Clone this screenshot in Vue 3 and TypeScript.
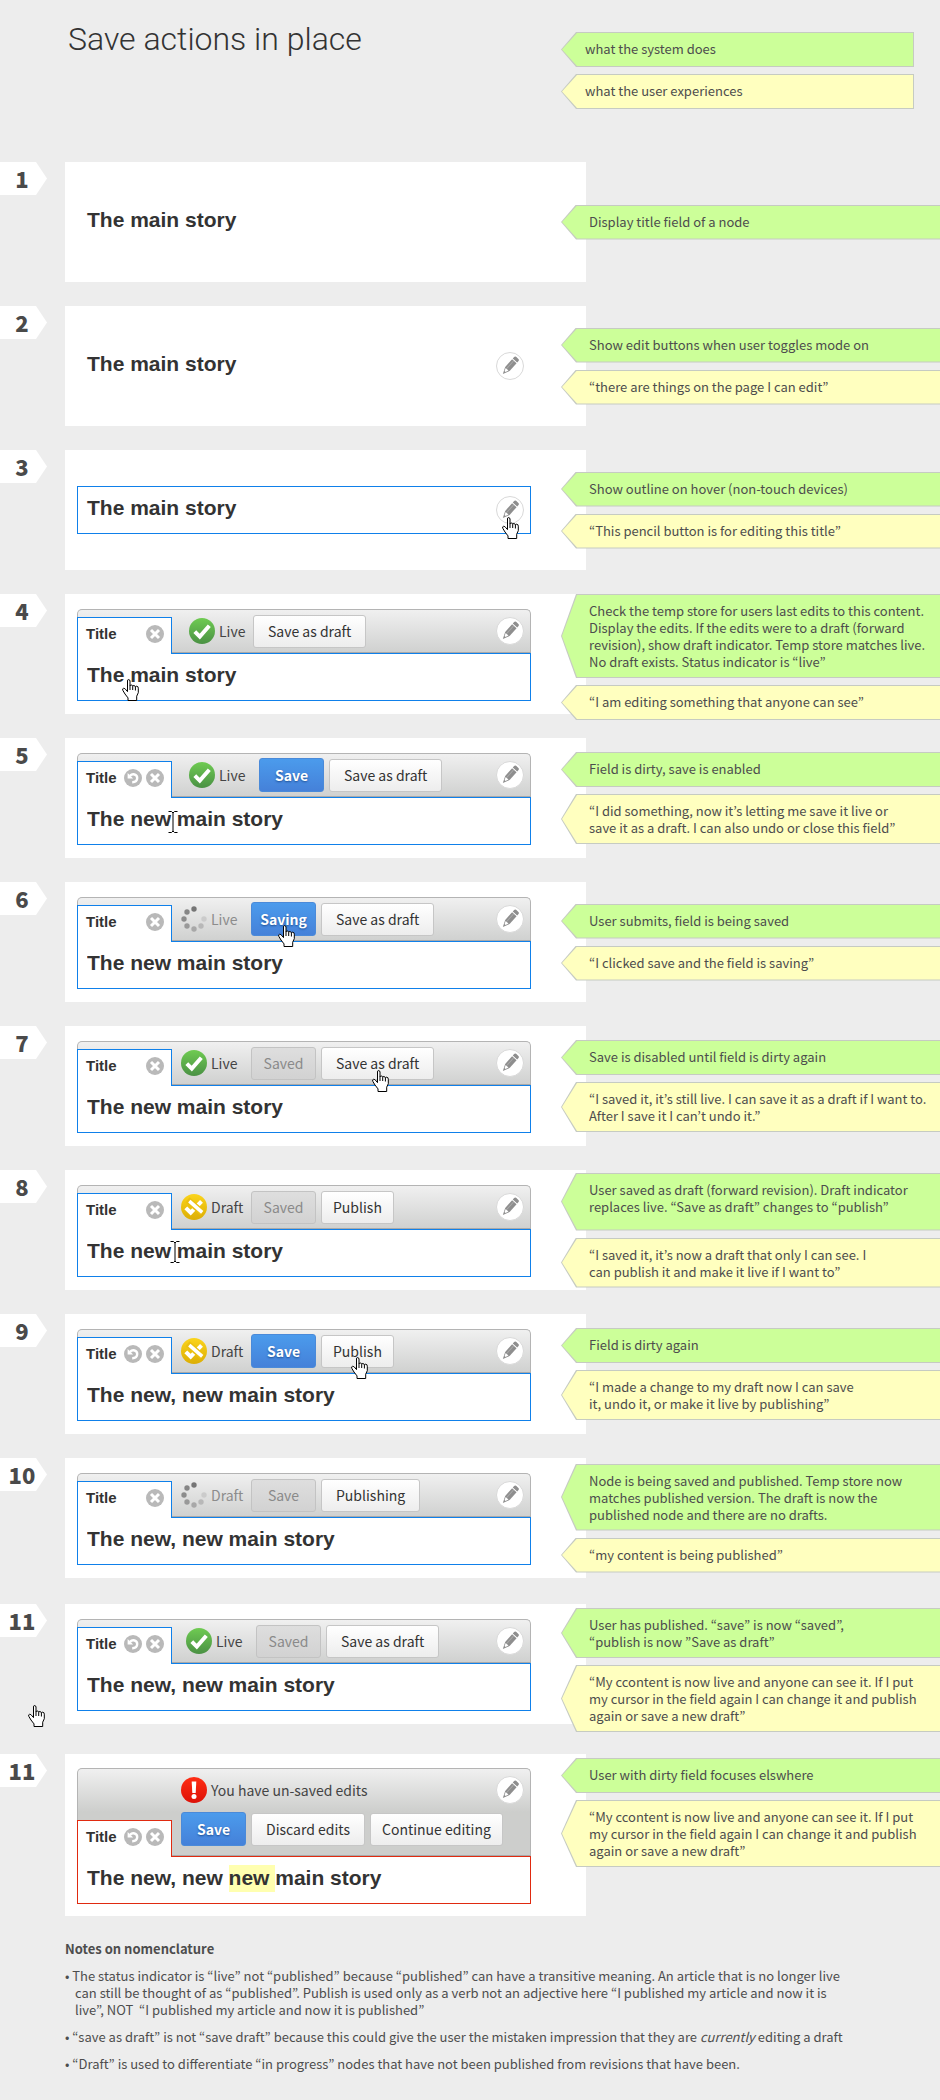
<script setup lang="ts">
type NoteKind = 'system' | 'user'
type StatusKind = 'live' | 'draft' | 'busy'
type ButtonKind = 'plain' | 'primary' | 'off'

interface Note { kind: NoteKind; text: string; roomy?: boolean }
interface Action { label: string; kind: ButtonKind; snug?: boolean }
interface Pointer { kind: 'hand' | 'beam'; x: number; y: number }
interface Step {
  id: string
  label: string
  title: string
  mode: 'view' | 'toggle' | 'hover' | 'edit' | 'warn'
  notes: Note[]
  place: 'middle' | 'top' | 'near-top'
  gap?: string
  indent?: string
  undo?: boolean
  status?: { kind: StatusKind; text: string; tight?: boolean }
  actions?: Action[]
  pointer?: Pointer
}

const sys = (text: string, roomy = false): Note => ({ kind: 'system', text, roomy })
const usr = (text: string): Note => ({ kind: 'user', text })

const legend: Note[] = [sys('what the system does'), usr('what the user experiences')]

const draftBtn: Action = { label: 'Save as draft', kind: 'plain' }
const publishBtn: Action = { label: 'Publish', kind: 'plain', snug: true }
const liveAgain = '“My ccontent is now live and anyone can see it. If I put\nmy cursor in the field again I can change it and publish\nagain or save a new draft”'

const steps: Step[] = [
  { id: 's1', label: '1', title: 'The main story', mode: 'view', place: 'middle', notes: [sys('Display title field of a node')] },
  {
    id: 's2', label: '2', title: 'The main story', mode: 'toggle', place: 'middle',
    notes: [sys('Show edit buttons when user toggles mode on'), usr('“there are things on the page I can edit”')],
  },
  {
    id: 's3', label: '3', title: 'The main story', mode: 'hover', place: 'middle',
    notes: [sys('Show outline on hover (non-touch devices)'), usr('“This pencil button is for editing this title”')],
    pointer: { kind: 'hand', x: 502, y: 67 },
  },
  {
    id: 's4', label: '4', title: 'The main story', mode: 'edit', place: 'top', indent: 'indent-l',
    status: { kind: 'live', text: 'Live', tight: true }, actions: [draftBtn],
    notes: [
      sys('Check the temp store for users last edits to this content.\nDisplay the edits. If the edits were to a draft (forward\nrevision), show draft indicator. Temp store matches live.\nNo draft exists. Status indicator is “live”'),
      usr('“I am editing something that anyone can see”'),
    ],
    pointer: { kind: 'hand', x: 122, y: 85 },
  },
  {
    id: 's5', label: '5', title: 'The new main story', mode: 'edit', place: 'middle', indent: 'indent-l', undo: true,
    status: { kind: 'live', text: 'Live' }, actions: [{ label: 'Save', kind: 'primary' }, draftBtn],
    notes: [
      sys('Field is dirty, save is enabled'),
      usr('“I did something, now it’s letting me save it live or\nsave it as a draft. I can also undo or close this field”'),
    ],
    pointer: { kind: 'beam', x: 168, y: 72 },
  },
  {
    id: 's6', label: '6', title: 'The new main story', mode: 'edit', place: 'middle',
    status: { kind: 'busy', text: 'Live' }, actions: [{ label: 'Saving', kind: 'primary' }, draftBtn],
    notes: [sys('User submits, field is being saved'), usr('“I clicked save and the field is saving”')],
    pointer: { kind: 'hand', x: 278, y: 43 },
  },
  {
    id: 's7', label: '7', title: 'The new main story', mode: 'edit', place: 'middle',
    status: { kind: 'live', text: 'Live' }, actions: [{ label: 'Saved', kind: 'off' }, draftBtn],
    notes: [
      sys('Save is disabled until field is dirty again'),
      usr('“I saved it, it’s still live. I can save it as a draft if I want to.\nAfter I save it I can’t undo it.”'),
    ],
    pointer: { kind: 'hand', x: 372, y: 44 },
  },
  {
    id: 's8', label: '8', title: 'The new main story', mode: 'edit', place: 'middle',
    status: { kind: 'draft', text: 'Draft' }, actions: [{ label: 'Saved', kind: 'off' }, publishBtn],
    notes: [
      sys('User saved as draft (forward revision). Draft indicator\nreplaces live. “Save as draft” changes to “publish”', true),
      usr('“I saved it, it’s now a draft that only I can see. I\ncan publish it and make it live if I want to”'),
    ],
    pointer: { kind: 'beam', x: 170, y: 70 },
  },
  {
    id: 's9', label: '9', title: 'The new, new main story', mode: 'edit', place: 'middle', undo: true,
    status: { kind: 'draft', text: 'Draft' }, actions: [{ label: 'Save', kind: 'primary' }, publishBtn],
    notes: [
      sys('Field is dirty again'),
      usr('“I made a change to my draft now I can save\nit, undo it, or make it live by publishing”'),
    ],
    pointer: { kind: 'hand', x: 351, y: 43 },
  },
  {
    id: 's10', label: '10', title: 'The new, new main story', mode: 'edit', place: 'middle',
    status: { kind: 'busy', text: 'Draft' }, actions: [{ label: 'Save', kind: 'off' }, { label: 'Publishing', kind: 'plain' }],
    notes: [
      sys('Node is being saved and published. Temp store now\nmatches published version. The draft is now the\npublished node and there are no drafts.'),
      usr('“my content is being published”'),
    ],
  },
  {
    id: 's11', label: '11', title: 'The new, new main story', mode: 'edit', place: 'near-top', gap: 'gap-m', indent: 'indent-m', undo: true,
    status: { kind: 'live', text: 'Live' }, actions: [{ label: 'Saved', kind: 'off' }, draftBtn],
    notes: [sys('User has published. “save” is now “saved”,\n“publish is now ”Save as draft”'), usr(liveAgain)],
    pointer: { kind: 'hand', x: 28, y: 101 },
  },
  {
    id: 's12', label: '11', title: '', mode: 'warn', place: 'near-top', undo: true,
    actions: [{ label: 'Save', kind: 'primary' }, { label: 'Discard edits', kind: 'plain' }, { label: 'Continue editing', kind: 'plain', snug: true }],
    notes: [sys('User with dirty field focuses elswhere'), usr(liveAgain)],
  },
]

const dots = [
  { x: 13, y: 3, fill: '#757575' },
  { x: 6, y: 6, fill: '#868686' },
  { x: 3, y: 13, fill: '#8c8c8c' },
  { x: 6, y: 20, fill: '#999999' },
  { x: 13, y: 23, fill: '#a8a8a8' },
  { x: 20, y: 20, fill: '#b8b8b8' },
  { x: 23, y: 13, fill: '#cbcbcb' },
]
</script>

<template>
  <main class="page">
    <svg class="defs" aria-hidden="true">
      <defs>
        <linearGradient id="g-live" x1="0" y1="0" x2="0" y2="1"><stop offset="0" stop-color="#6fcb52" /><stop offset="1" stop-color="#4a9144" /></linearGradient>
        <linearGradient id="g-draft" x1="0" y1="0" x2="0" y2="1"><stop offset="0" stop-color="#fbd41c" /><stop offset="1" stop-color="#dcae05" /></linearGradient>
        <linearGradient id="g-alert" x1="0" y1="0" x2="0" y2="1"><stop offset="0" stop-color="#ff2d14" /><stop offset="1" stop-color="#dd1208" /></linearGradient>
        <g id="pencil" transform="rotate(42 14 14)">
          <path d="M10.800 3.800q0-1.500 1.500-1.500h3.400q1.500 0 1.500 1.500v2.200h-6.400z" />
          <path d="M10.800 7h6.400v11.200L14 25.500l-3.200-7.300z" />
          <path d="M12 18.700h4l-1.300 3.300h-1.400z" fill="#fff" />
          <path d="M13.200 7.500v10.300" stroke="#ababab" />
        </g>
      </defs>
    </svg>

    <header class="head">
      <h1>Save actions in place</h1>
      <div class="legend">
        <p v-for="n in legend" :key="n.text" class="note" :class="n.kind">{{ n.text }}</p>
      </div>
    </header>

    <section v-for="s in steps" :key="s.id" class="step" :class="s.gap">
      <div class="tag">{{ s.label }}</div>

      <div class="panel" :class="s.mode">
        <div v-if="s.mode === 'view' || s.mode === 'toggle' || s.mode === 'hover'" class="field still">
          <h2>{{ s.title }}</h2>
          <button v-if="s.mode !== 'view'" class="pencil" type="button" aria-label="Edit title">
            <svg viewBox="0 0 28 28"><use href="#pencil" /></svg>
          </button>
        </div>

        <div v-else class="editor">
          <div class="bar">
            <div class="tab">
              <label :id="s.id + '-label'" :for="s.id">Title</label>
              <button v-if="s.undo" class="mini" type="button" aria-label="Undo">
                <svg viewBox="0 0 18 18"><circle cx="9" cy="9" r="9" /><path class="line" d="M6 6.800C8.500 4.200 13.200 5.200 13.200 9c0 2.800-2.200 4.200-5 4.200" /><path class="tip" d="M3.600 4v5.500h5.500z" /></svg>
              </button>
              <button class="mini" type="button" aria-label="Close">
                <svg viewBox="0 0 18 18"><circle cx="9" cy="9" r="9" /><path class="cross" d="M5 5l8 8M13 5l-8 8" /></svg>
              </button>
            </div>

            <div class="tools" :class="s.indent">
              <div v-if="s.mode === 'warn'" class="status alert">
                <svg viewBox="0 0 26 26"><circle cx="13" cy="13" r="13" fill="url(#g-alert)" /><path d="M10.700 4.500h4.600l-.6 11.500h-3.400z" fill="#fff" /><circle cx="13" cy="19.600" r="2.500" fill="#fff" /></svg>
                <span>You have un-saved edits</span>
              </div>
              <div v-if="s.status" class="status" :class="[s.status.kind, { tight: s.status.tight }]">
                <svg v-if="s.status.kind === 'live'" viewBox="0 0 26 26"><circle cx="13" cy="13" r="13" fill="url(#g-live)" /><path class="tick" d="M5.800 13.600l5 5L20.300 7.800" /></svg>
                <svg v-else-if="s.status.kind === 'draft'" viewBox="0 0 26 26"><circle cx="13" cy="13" r="13" fill="url(#g-draft)" /><path class="tick" d="M4.800 13.800l4.900 4.900L20.500 7.400" /><path class="gapline" d="M6.500 5.800L21.200 18.500" /><path class="slash" d="M8.300 7.200L21.200 18.300" /></svg>
                <svg v-else viewBox="0 0 26 26"><circle v-for="d in dots" :key="d.fill" :cx="d.x" :cy="d.y" r="2.700" :fill="d.fill" /></svg>
                <span>{{ s.status.text }}</span>
              </div>
              <div class="actions">
                <button v-for="a in s.actions" :key="a.label" class="btn" :class="[a.kind, { snug: a.snug }]" :disabled="a.kind === 'off'" type="button">{{ a.label }}</button>
              </div>
            </div>

            <button class="pencil" type="button" aria-label="Edit title">
              <svg viewBox="0 0 28 28"><use href="#pencil" /></svg>
            </button>
          </div>

          <div class="field">
            <div v-if="s.mode === 'warn'" class="rich" contenteditable="true" role="textbox" :aria-labelledby="s.id + '-label'">The new, new <mark>new </mark>main story</div>
            <input v-else :id="s.id" type="text" :value="s.title">
          </div>
        </div>
      </div>

      <div class="notes" :class="s.place">
        <p v-for="n in s.notes" :key="n.text" class="note" :class="[n.kind, { roomy: n.roomy }]">{{ n.text }}</p>
      </div>

      <svg v-if="s.pointer?.kind === 'hand'" class="pointer hand" viewBox="0 0 17 22" :style="{ left: s.pointer.x + 'px', top: s.pointer.y + 'px' }" aria-hidden="true">
        <path d="M5.500 2Q5.500.5 6.600.5T8 2v5q0-1 1.300-1t1.400 1.400q.1-.9 1.200-.9t1.500 1.400q.2-.7 1.200-.7 1.700 0 1.700 2v4.500l-1.600 3.500v4.300H6v-2.600L3 15 .9 11.500Q0 9.500 1.500 9.300T4 10.900l1.500 1.700z" />
        <path class="fold" d="M8 7v4M10.700 7.400V11M13.400 8v3.500" />
      </svg>
      <svg v-else-if="s.pointer" class="pointer beam" viewBox="0 0 10 24" :style="{ left: s.pointer.x + 'px', top: s.pointer.y + 'px' }" aria-hidden="true">
        <path class="halo" d="M.5 1.500H3.500L5 3 6.500 1.500H9.500M5 3V21M.5 22.500H3.500L5 21 6.500 22.500H9.500" />
        <path d="M.5 1.500H3.500L5 3 6.500 1.500H9.500M5 3V21M.5 22.500H3.500L5 21 6.500 22.500H9.500" />
      </svg>
    </section>

    <footer class="foot">
      <h3>Notes on nomenclature</h3>
      <ul>
        <li>• The status indicator is “live” not “published” because “published” can have a transitive meaning. An article that is no longer live<br>can still be thought of as “published”. Publish is used only as a verb not an adjective here “I published my article and now it is<br>live”, NOT&nbsp; “I published my article and now it is published”</li>
        <li>• “save as draft” is not “save draft” because this could give the user the mistaken impression that they are <em>currently</em> editing a draft</li>
        <li>• “Draft” is used to differentiate “in progress” nodes that have not been published from revisions that have been.</li>
      </ul>
    </footer>
  </main>
</template>

<style>
html, body { margin: 0; background: #ededed; }
</style>

<style scoped>
.page {
  --sans: "Noto Sans CJK KR", "Noto Sans", sans-serif;
  --title: "Liberation Sans", Arial, sans-serif;
  --edge: #0f80ea;
  overflow: hidden;
  padding-bottom: 30px;
  background: #ededed;
  color: #4d4d4d;
  font: 13px/17px var(--sans);
}
.page *, .page *::before { box-sizing: border-box; }
.defs { position: absolute; width: 0; height: 0; }
h1, h2, h3, p, ul { margin: 0; padding: 0; }
button { padding: 0; border: 0; background: none; font: inherit; color: inherit; }

.head, .step {
  display: grid;
  grid-template-columns: 65px minmax(0, 521fr) minmax(0, 354fr);
}
.head { height: 162px; }
h1 {
  grid-column: 2;
  padding: 19px 0 0 3px;
  font: 300 32px/40px Roboto, "Liberation Sans", sans-serif;
  color: #333;
}
.legend { display: grid; align-content: start; gap: 7px; margin: 32px 26px 0 -25px; }
.legend .note { padding-left: 24px; }
.legend .note::before { right: 1px; }

.step { position: relative; margin-bottom: 24px; }
.step.gap-m { margin-top: 26px; margin-bottom: 30px; }
.tag {
  width: 47px;
  height: 33px;
  padding-right: 3px;
  background: #fff;
  clip-path: polygon(0 0, 36px 0, 100% 50%, 36px 100%, 0 100%);
  font: 900 22px/32px var(--sans);
  text-align: center;
  color: #4a4a4a;
}
.panel { display: flex; align-self: start; min-height: 120px; padding: 0 55px 0 12px; background: #fff; }
.panel.view, .panel.toggle, .panel.hover { align-items: center; }
.panel.edit { padding-top: 15px; }
.panel.warn { --edge: #e02a10; padding-top: 14px; padding-bottom: 12px; }

.field {
  display: flex;
  align-items: center;
  height: 48px;
  padding: 0 9px 4px;
  border: 1px solid var(--edge);
  background: #fff;
}
.still { flex: 1; justify-content: space-between; padding-right: 6px; }
.view .field, .toggle .field { border-color: transparent; }
h2, .field input, .rich {
  font: 700 21px/24px var(--title);
  color: #333;
}
.field input { flex: 1; min-width: 0; height: 24px; padding: 0; border: 0; background: none; outline: 0; }
.rich { white-space: pre-wrap; outline: 0; }
mark { padding: 1px 0 3px; background: #ffffb0; color: inherit; }

.pencil {
  flex: none;
  width: 28px;
  height: 28px;
  border: 1px solid #d9d9d9;
  border-radius: 50%;
  background: #fff;
}
.pencil svg { display: block; width: 26px; height: 26px; fill: #8e8e8e; }
.bar .pencil { margin: 7px 6px 0 0; align-self: flex-start; }
.still .pencil { margin-top: 3px; }

.editor { flex: 1; min-width: 0; }
.bar {
  display: flex;
  min-height: 44px;
  border: 1px solid #b4b4b4;
  border-bottom-color: #a9a9a9;
  border-radius: 5px 5px 0 0;
  background: linear-gradient(#f0f0f0, #d0d1d0);
}
.warn .bar { background: linear-gradient(#f0f0f0, #cdcecc 50%, #cdcecc); }
.tab {
  position: relative;
  z-index: 1;
  display: flex;
  align-items: center;
  align-self: flex-end;
  flex: none;
  gap: 4px;
  width: 95px;
  height: 37px;
  margin: 0 0 -2px -1px;
  padding: 0 7px 5px 8px;
  border: 1px solid var(--edge);
  border-bottom: 0;
  background: #fff;
}
.tab label { flex: 1; font: 700 15px/18px var(--title); color: #333; }
.mini { flex: none; width: 18px; height: 18px; }
.mini svg { display: block; width: 18px; height: 18px; fill: #b9b9b9; }
.mini .line { fill: none; stroke: #fff; stroke-width: 2.4; }
.mini .tip { fill: #fff; }
.mini .cross { stroke: #fff; stroke-width: 3; }

.tools { display: flex; flex: 1; align-items: center; min-width: 0; padding-left: 9px; }
.indent-m { padding-left: 14px; }
.indent-l { padding-left: 17px; }
.warn .tools { flex-direction: column; align-items: flex-start; gap: 9px; padding-top: 8px; padding-bottom: 9px; }
.status {
  display: flex;
  align-items: center;
  gap: 4px;
  min-width: 70px;
  font-size: 14px;
  line-height: 20px;
  color: #444;
  white-space: nowrap;
}
.status.tight { min-width: 64px; }
.status.busy { color: #8c8c8c; }
.status svg { flex: none; width: 26px; height: 26px; }
.tick, .slash { fill: none; stroke: #fff; stroke-width: 4; }
.slash { stroke-width: 3.5; }
.gapline { fill: none; stroke: #ecc010; stroke-width: 6.5; }

.actions { display: flex; align-items: center; gap: 5px; }
.btn {
  min-width: 65px;
  height: 33px;
  padding: 0 14px;
  border: 1px solid #c6c6c6;
  border-radius: 3px;
  background: linear-gradient(#fff, #ededed);
  font-size: 14px;
  line-height: 20px;
  color: #333;
  white-space: nowrap;
}
.btn.snug { padding: 0 11px; }
.btn.primary {
  height: 34px;
  padding: 0 8px;
  border-color: #4a8ad9;
  background: linear-gradient(#4b9bec, #4581d9);
  color: #fff;
  font-weight: 700;
  text-shadow: 0 1px 2px #1f4f94;
}
.btn.off { padding: 0 8px; border-color: #c3c3c3; background: linear-gradient(#dedede, #d2d2d2); color: #8a8a8a; }

.notes { display: grid; gap: 7px; align-content: start; margin-left: -25px; }
.notes.middle { align-self: center; }
.notes.top { margin-bottom: -24px; align-self: start; }
.notes.near-top { margin-bottom: -24px; padding-top: 4px; align-self: start; }
.note {
  --line: #c6cbc2;
  position: relative;
  min-height: 35px;
  padding: 8px 0 8px 28px;
  background: var(--line);
  clip-path: polygon(0 50%, 15px 0, 100% 0, 100% 100%, 15px 100%);
  white-space: pre-line;
  z-index: 0;
}
.note::before {
  content: "";
  position: absolute;
  z-index: -1;
  inset: 1px 0 1px 1px;
  clip-path: polygon(0 50%, 15px 0, 100% 0, 100% 100%, 15px 100%);
}
.note.system::before { background: #cf9; }
.note.user::before { background: #ffffbf; }
.note.roomy { min-height: 58px; }

.pointer { position: absolute; z-index: 2; overflow: visible; stroke: #000; }
.hand { width: 17px; height: 22px; fill: #fff; }
.fold { fill: none; }
.beam { width: 10px; height: 24px; fill: none; }
.halo { stroke: #fff; stroke-width: 3; }

.foot { margin: 22px 40px 0 65px; }
.foot h3 { font: 700 13px/17px var(--sans); }
.foot ul { list-style: none; }
.foot li { margin-top: 10px; padding-left: 10px; text-indent: -10px; }
.foot em { font-style: italic; }
</style>
